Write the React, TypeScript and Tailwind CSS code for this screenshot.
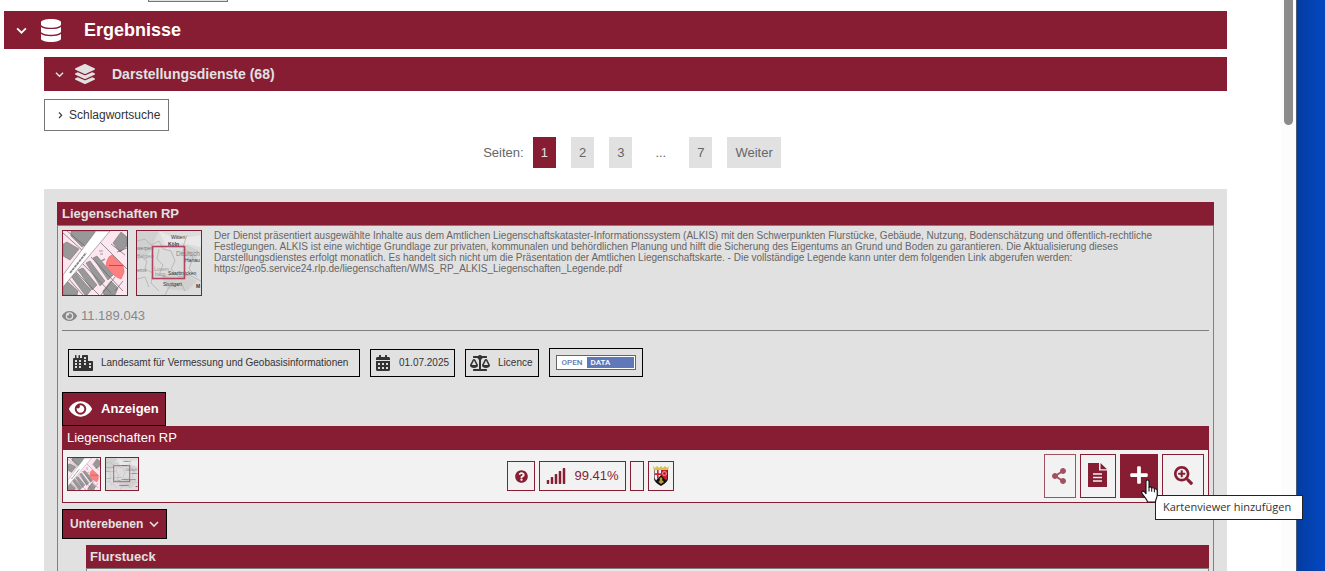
import type { ReactNode } from "react";
import {
  FaBalanceScale,
  FaCalendarAlt,
  FaCity,
  FaDatabase,
  FaEye,
  FaLayerGroup,
  FaPlus,
  FaQuestionCircle,
  FaSearchPlus,
  FaShareAlt,
  FaSignal,
} from "react-icons/fa";

function ChevronDown({ className }: { className: string }) {
  return (
    <svg viewBox="0 0 10 10" className={className} aria-hidden="true">
      <path d="M1 3 5 7 9 3" fill="none" stroke="currentColor" strokeWidth="1.6" />
    </svg>
  );
}

function ChevronRight({ className }: { className: string }) {
  return (
    <svg viewBox="0 0 10 10" className={className} aria-hidden="true">
      <path d="M4 2.500 6.700 5.200 4 8" fill="none" stroke="currentColor" strokeWidth="1.100" />
    </svg>
  );
}

function ParcelMap({ className }: { className: string }) {
  return (
    <svg viewBox="0 0 64 64" className={className} role="img" aria-label="Vorschau">
      <rect width="64" height="64" fill="#fde6f0" />
      <g fill="#989898" stroke="#7a7a7a" strokeWidth="0.6">
        <path d="M0 13 4 11 16 18 7 29 0 25Z" />
        <path d="M8 0H32L27 10 19 16 8 5Z" />
        <path d="M50 12 58 1 64 6V15L57 21Z" />
        <path d="M30 27 34 25 50 44 45 49Z" />
        <path d="M23 32 27 30 42 50 37 55Z" />
        <path d="M15 39 20 37 34 54 29 59Z" />
        <path d="M8 45 13 42 28 59 24 64H22Z" />
        <path d="M0 57 4 50 15 60 14 64H0Z" />
        <path d="M40 60 48 50 55 57 52 64H41Z" />
      </g>
      <g fill="none" stroke="#666" strokeWidth="0.7">
        <path d="M0 2 20 20M4 0 23 16M34 8 64 38M48 13 62 24M54 21 64 17M28 26 60 60M20 33 48 62M12 40 36 64M4 46 20 64M52 46 38 64M60 50 52 60" />
      </g>
      <path d="M24 62 27 57 M35 32 42 28M8 35 3 42" stroke="#999" strokeWidth="1.500" />
      <path d="M36 20H40M37 23H40M20 57H23" stroke="#999" strokeWidth="1.200" />
      <path d="M0 44 33 0H47L0 56Z" fill="#fff" stroke="#777" strokeWidth="0.6" />
      <path d="M7 42 23 22" stroke="#888" strokeWidth="1.800" strokeDasharray="3 0.6" />
      <path d="M44 30 46 26 49 24 54 29 60 34 61 41 58 48 52 45 46 39 43 35Z" fill="#fd8080" stroke="#f06a6a" strokeWidth="0.8" />
      <path d="M46 34.500H60" stroke="#666" strokeWidth="0.9" />
    </svg>
  );
}

function OverviewMap({ className }: { className: string }) {
  return (
    <svg viewBox="0 0 64 64" className={className} role="img" aria-label="Übersichtskarte">
      <rect width="64" height="64" fill="#dcdcdc" />
      <path d="M0 0H22L12 22 0 30ZM24 44 44 40 60 50 50 60 30 58ZM42 22 58 30 62 20 50 14Z" fill="#d0d0d0" />
      <path d="M22 0 40 8 64 4V16L44 12 30 18Z" fill="#e8e8e8" />
      <g fill="none" stroke="#b0b0b0" strokeWidth="0.8">
        <path d="M0 10 8 8 14 14 22 10 26 18 34 20 38 30 34 38 42 46 52 44 64 50" />
        <path d="M4 26 10 30 8 38 16 42 14 52 22 60M50 4 46 16 56 26 52 38 60 46M28 64 32 56 44 52 48 60" />
        <path d="M22 18 20 28 26 34 22 44 30 46M0 48 8 46 12 56" />
      </g>
      <g fontFamily="Liberation Sans, sans-serif" fontSize="5" fill="#333">
        <text x="34" y="8">Witten</text>
        <text x="31" y="15" fontWeight="bold">Köln</text>
        <text x="0" y="19" fill="#777">werpen</text>
        <text x="0" y="27" fill="#999">Belgien</text>
        <text x="39" y="25" fontSize="6.500" fill="#888">Deutsch</text>
        <text x="48" y="31">Hanau</text>
        <text x="0" y="41" fill="#777">ems</text>
        <text x="17" y="40" fill="#999">Luxem</text>
        <text x="18" y="45" fill="#999">burg</text>
        <text x="31" y="44">Saarbrücken</text>
        <text x="26" y="55">Stuttgart</text>
        <text x="59" y="57" fontWeight="bold">M</text>
      </g>
      <rect x="15.500" y="15.500" width="32" height="32" fill="none" stroke="#b0455f" strokeWidth="1.6" />
    </svg>
  );
}

function DocumentIcon() {
  return (
    <svg viewBox="0 0 19 24" className="h-6 w-[19px]" aria-hidden="true">
      <path d="M0 0H11V7.500H19V24H0Z" fill="#871d33" />
      <path d="M12.500 0 19 6.300H12.500Z" fill="#871d33" />
      <path d="M5 11H14M5 14.500H14M5 18H14" stroke="#f2f2f2" strokeWidth="1.300" />
    </svg>
  );
}

function CoatOfArms() {
  return (
    <svg viewBox="0 0 16 20" className="h-5 w-4" aria-label="Rheinland-Pfalz" role="img">
      <path d="M0 0 2 2 4 0 6 2 8 0 10 2 12 0 14 2 16 0 15 5H1Z" fill="#d9c04a" />
      <path d="M1 4H15V12C15 16 11 18 8 20 5 18 1 16 1 12Z" fill="#111" />
      <path d="M1.500 4H8V9L3 14.500 1.500 12Z" fill="#eee" />
      <path d="M4 4H5.600V7.300H8V9H5.600V12L4 13V9H1.500V7.300H4Z" fill="#d3222f" />
      <path d="M8 4H14.500V12L13 14.500 8 9Z" fill="#c91f30" />
      <circle cx="11.500" cy="7.500" r="2" fill="none" stroke="#e6b5b5" strokeWidth="0.800" />
      <path d="M8 11 9.500 12.500 9 14 11 16 8 18 5.500 16 7 14 6.500 12.500Z" fill="#b89b30" />
    </svg>
  );
}

function HandCursor() {
  return (
    <svg viewBox="0 0 17 24" className="h-6 w-[17px]" aria-hidden="true">
      <path
        d="M5 2.500C5 .3 8 .3 8 2.500V8.500C8.500 7.500 10.600 7.700 10.700 9.200 11.300 8.400 13.400 8.600 13.400 10.200 14.200 9.400 16.200 9.900 16.200 11.500V16C16.200 19 14.500 20 14.500 23H6.500C6.500 20.500 3 18 1 14.300 0 12.300 2.300 11.300 3.600 13L5 14.700Z"
        fill="#fff"
        stroke="#111"
        strokeWidth="1.100"
        strokeLinejoin="round"
      />
      <path d="M8 8.500V12.500M10.700 9.200V12.800M13.400 10.200V13.300" stroke="#111" strokeWidth="1" />
    </svg>
  );
}

function Tag({ icon, className = "", children }: { icon: ReactNode; className?: string; children: ReactNode }) {
  return (
    <li
      className={`flex h-7 items-center gap-2 border border-black pr-[5px] pl-1 text-[10px] text-[#333] ${className}`}
    >
      {icon}
      {children}
    </li>
  );
}

function PageButton({ children }: { children: ReactNode }) {
  return (
    <button type="button" className="h-[31px] bg-[#e1e1e1] px-2">
      {children}
    </button>
  );
}

export default function App() {
  return (
    <div className="flex h-screen overflow-hidden bg-white font-['Liberation_Sans',Arial,sans-serif] text-[13px] text-[#666]">
      <main className="min-w-0 flex-1 pr-[54px] pl-1">
        <div className="ml-36 h-[2px] w-20 border-x border-b border-[#767676] bg-[#e1e1e1]" />

        <h1 className="mt-[9px] flex h-[38px] items-center bg-[#871d33] text-[18px] font-bold text-white">
          <ChevronDown className="ml-3 size-[11px]" />
          <FaDatabase className="ml-[14px] h-[23px] w-5" />
          <span className="ml-[23px]">Ergebnisse</span>
        </h1>

        <div className="pl-10">
          <h2 className="mt-2 flex h-[34px] items-center bg-[#871d33] text-[14px] font-bold text-[#e1e1e1]">
            <ChevronDown className="ml-[11px] size-[9px]" />
            <FaLayerGroup className="ml-[11px] size-5" />
            <span className="ml-[17px]">Darstellungsdienste (68)</span>
          </h2>

          <button
            type="button"
            className="mt-2 flex h-8 items-center gap-1 border border-[#767676] bg-white pr-2 pl-[10px] text-[12px] text-[#333]"
          >
            <ChevronRight className="size-[10px]" />
            Schlagwortsuche
          </button>

          <nav aria-label="Seiten" className="mt-[6px] flex h-[31px] items-center justify-center gap-[15px] pr-[7px]">
            <span className="-mr-[6px]">Seiten:</span>
            <button type="button" aria-current="page" className="h-[31px] bg-[#871d33] px-2 text-[#e1e1e1]">
              1
            </button>
            <PageButton>2</PageButton>
            <PageButton>3</PageButton>
            <span className="px-2">...</span>
            <PageButton>7</PageButton>
            <PageButton>Weiter</PageButton>
          </nav>

          <section className="mt-[21px] bg-[#e1e1e1] p-[13px]">
            <h3 className="flex h-[23px] items-center bg-[#871d33] pl-[5px] font-bold text-[#e1e1e1]">
              Liegenschaften RP
            </h3>
            <div className="border border-[#808080] px-1 pt-1">
              <div className="flex items-start gap-2">
                <ParcelMap className="size-[66px] shrink-0 border border-[#871d33]" />
                <OverviewMap className="size-[66px] shrink-0 border border-[#871d33]" />
                <p className="ml-1 text-[10px] leading-[11px]">
                  Der Dienst präsentiert ausgewählte Inhalte aus dem Amtlichen Liegenschaftskataster-Informationssystem
                  (ALKIS) mit den Schwerpunkten Flurstücke, Gebäude, Nutzung, Bodenschätzung und öffentlich-rechtliche
                  <br />
                  Festlegungen. ALKIS ist eine wichtige Grundlage zur privaten, kommunalen und behördlichen Planung und
                  hilft die Sicherung des Eigentums an Grund und Boden zu garantieren. Die Aktualisierung dieses
                  <br />
                  Darstellungsdienstes erfolgt monatlich. Es handelt sich nicht um die Präsentation der Amtlichen
                  Liegenschaftskarte. - Die vollständige Legende kann unter dem folgenden Link abgerufen werden:
                  <br />
                  https://geo5.service24.rlp.de/liegenschaften/WMS_RP_ALKIS_Liegenschaften_Legende.pdf
                </p>
              </div>

              <div className="mt-3 flex h-4 items-center gap-1 text-[#888]">
                <FaEye className="h-[14px] w-[15px]" />
                11.189.043
              </div>
              <hr className="mt-[6px] border-t border-[#808080]" />

              <ul className="mt-[17px] flex h-[29px] items-center gap-[10px] pl-[6px]">
                <Tag className="min-w-[292px]" icon={<FaCity className="h-4 w-5" />}>
                  Landesamt für Vermessung und Geobasisinformationen
                </Tag>
                <Tag icon={<FaCalendarAlt className="mx-px h-4 w-[14px]" />}>01.07.2025</Tag>
                <Tag icon={<FaBalanceScale className="h-4 w-5" />}>Licence</Tag>
                <li className="flex h-[29px] items-center border border-black px-[6px]">
                  <a
                    href="#opendata"
                    className="flex h-[15px] w-20 border border-[#666] bg-white p-px font-['Roboto',sans-serif] text-[8px] leading-[11px] font-medium"
                  >
                    <span className="w-[29px] pl-1 text-[#5f78b8]">OPEN</span>
                    <span className="flex-1 bg-[#5f78b8] pl-1 text-white">DATA</span>
                  </a>
                </li>
              </ul>

              <button
                type="button"
                className="mt-[15px] flex h-[34px] items-center gap-[9px] border border-black bg-[#871d33] px-[6px] font-bold text-white"
              >
                <FaEye className="h-6 w-[23px]" />
                Anzeigen
              </button>

              <div className="bg-[#f2f2f2]">
                <h4 className="flex h-6 items-center bg-[#871d33] pl-[5px] text-white">Liegenschaften RP</h4>
                <div className="grid h-[53px] grid-cols-[1fr_auto_1fr] border border-t-0 border-[#871d33] px-1">
                  <div className="flex gap-1 pt-[7px]">
                    <ParcelMap className="size-[34px] border border-[#871d33]" />
                    <OverviewMap className="size-[34px] border border-[#871d33]" />
                  </div>
                  <div className="mr-[90px] flex gap-1 pt-[11px] text-[#871d33]">
                    <button
                      type="button"
                      aria-label="Hilfe"
                      className="flex h-[30px] w-7 items-center justify-center border border-[#871d33]"
                    >
                      <FaQuestionCircle className="size-[13px]" />
                    </button>
                    <span className="flex h-[30px] items-center gap-2 border border-[#871d33] px-[6px]">
                      <FaSignal className="h-4 w-5" />
                      99.41%
                    </span>
                    <span className="h-[30px] w-[14px] border border-[#871d33]" />
                    <span className="flex h-[30px] w-[26px] items-center justify-center border border-[#871d33]">
                      <CoatOfArms />
                    </span>
                  </div>
                  <div className="flex justify-end gap-1 pt-1 text-[#871d33]">
                    <button
                      type="button"
                      aria-label="Teilen"
                      className="flex h-11 w-8 items-center justify-center border border-[#871d33] pr-[2px] opacity-75"
                    >
                      <FaShareAlt className="size-4" />
                    </button>
                    <button
                      type="button"
                      aria-label="Metadaten"
                      className="flex h-11 w-9 items-center justify-center border border-[#871d33] pr-[2px] pb-[2px]"
                    >
                      <DocumentIcon />
                    </button>
                    <div className="relative">
                      <button
                        type="button"
                        aria-label="Hinzufügen"
                        className="flex h-11 w-[38px] items-center justify-center bg-[#871d33] pb-[2px] text-white"
                      >
                        <FaPlus className="size-5" />
                      </button>
                      <div className="absolute top-[25px] left-[21px] z-20">
                        <HandCursor />
                      </div>
                      <div
                        role="tooltip"
                        className="absolute top-[41px] left-[35px] z-10 flex h-[25px] w-[148px] items-center border border-[#222] bg-white px-[7px] font-['Open_Sans',sans-serif] text-[11px] whitespace-nowrap text-[#333]"
                      >
                        Kartenviewer hinzufügen
                      </div>
                    </div>
                    <button
                      type="button"
                      aria-label="Zoom"
                      className="flex h-11 w-[42px] items-center justify-center border border-[#871d33] pb-[2px]"
                    >
                      <FaSearchPlus className="size-[19px]" />
                    </button>
                  </div>
                </div>
              </div>

              <button
                type="button"
                className="mt-[6px] flex h-[30px] items-center gap-[6px] border border-black bg-[#871d33] px-[7px] text-[12px] font-bold text-[#e1e1e1]"
              >
                Unterebenen
                <ChevronDown className="size-[10px]" />
              </button>

              <div className="mt-[6px] ml-6">
                <h4 className="flex h-[23px] items-center bg-[#871d33] pl-1 font-bold text-[#e1e1e1]">Flurstueck</h4>
                <div className="h-8 border border-[#808080] bg-[#e9e9e9]" />
              </div>
            </div>
          </section>
        </div>
      </main>

      <div className="w-[15px] shrink-0 bg-[#fcfcfc] px-[3px]">
        <div className="h-[125px] rounded-b-full bg-[#8b8b8b]" />
      </div>
      <div className="w-[29px] shrink-0 border-l border-[#44597c] bg-linear-to-r from-[#033da0] to-[#0447c2]" />
    </div>
  );
}
